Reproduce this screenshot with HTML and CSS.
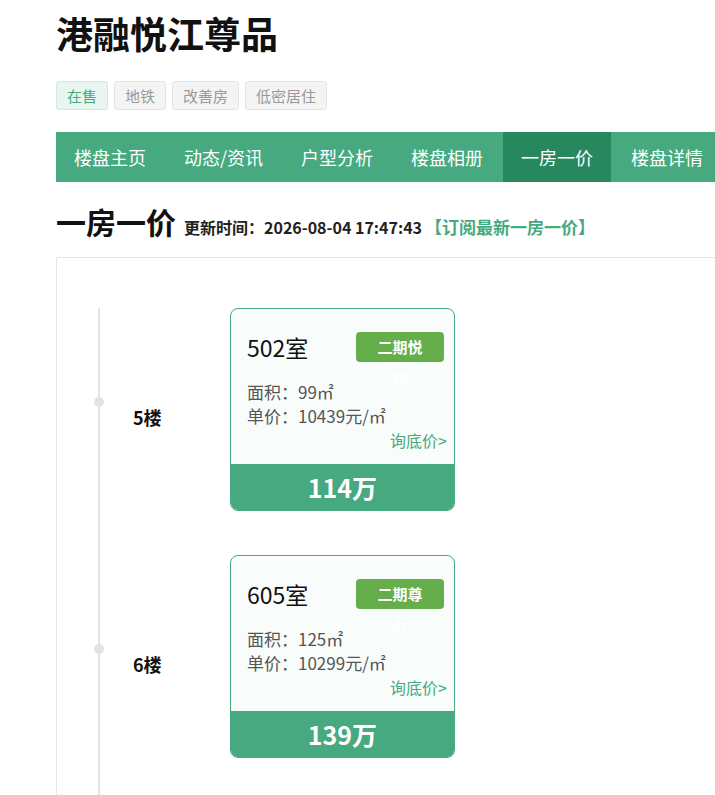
FILE: index.html
```html
<!DOCTYPE html>
<html lang="zh-CN">
<head>
    <meta charset="UTF-8">
    <meta name="viewport" content="width=device-width, initial-scale=1.0">
    <title>港融悦江尊品 - 一房一价</title>
    <link rel="stylesheet" href="styles.css">
</head>
<body>
    <div class="page">
        <h1 class="house-name">港融悦江尊品</h1>
        <div class="tags">
            <span class="tag on-sale">在售</span>
            <span class="tag">地铁</span>
            <span class="tag">改善房</span>
            <span class="tag">低密居住</span>
        </div>

        <ul class="nav">
            <li><a href="#">楼盘主页</a></li>
            <li><a href="#">动态/资讯</a></li>
            <li><a href="#">户型分析</a></li>
            <li><a href="#">楼盘相册</a></li>
            <li class="active"><a href="#">一房一价</a></li>
            <li><a href="#">楼盘详情</a></li>
        </ul>

        <div class="price-head">
            <h2>一房一价</h2>
            <span class="update-time">更新时间：2026-08-04 17:47:43</span>
            <a class="subscribe" href="#">【订阅最新一房一价】</a>
        </div>

        <div class="price-box">
            <div class="timeline">
                <div class="floor-row">
                    <span class="dot"></span>
                    <span class="floor">5楼</span>
                    <div class="room-card">
                        <div class="card-body">
                            <div class="card-top">
                                <span class="room-no">502室</span>
                                <span class="phase">二期悦园</span>
                            </div>
                            <p class="info">面积：99㎡</p>
                            <p class="info">单价：10439元/㎡</p>
                            <a class="ask" href="#">询底价&gt;</a>
                        </div>
                        <div class="total">114万</div>
                    </div>
                </div>
                <div class="floor-row">
                    <span class="dot"></span>
                    <span class="floor">6楼</span>
                    <div class="room-card">
                        <div class="card-body">
                            <div class="card-top">
                                <span class="room-no">605室</span>
                                <span class="phase">二期尊府</span>
                            </div>
                            <p class="info">面积：125㎡</p>
                            <p class="info">单价：10299元/㎡</p>
                            <a class="ask" href="#">询底价&gt;</a>
                        </div>
                        <div class="total">139万</div>
                    </div>
                </div>
            </div>
        </div>
    </div>
</body>
</html>
```

FILE: styles.css
```css
body { margin: 0; font-family: 'Noto Sans CJK SC', 'Noto Sans', sans-serif; color: #111; background: #fff; overflow-x: hidden; }
a { text-decoration: none; }
.page { width: 1200px; padding-left: 56px; }

.house-name { margin: 8px 0 0; font-size: 37px; line-height: 50px; font-weight: bold; color: #111; }

.tags { display: flex; gap: 6px; margin-top: 23px; }
.tag { font-size: 15px; line-height: 27px; padding: 0 10px; border: 1px solid #e3e3e3; border-radius: 3px; background: #f4f4f4; color: #999; }
.tag.on-sale { background: #e9f6f0; border-color: #cfeade; color: #46a980; }

.nav { display: flex; gap: 2px; list-style: none; margin: 22px 0 0; padding: 0; background: #46a980; height: 50px; }
.nav li a { display: block; padding: 0 18px; font-size: 18px; line-height: 50px; color: #fff; }
.nav li.active { background: #27875f; }

.price-head { display: flex; align-items: baseline; margin-top: 19px; line-height: 40px; }
.price-head h2 { margin: 0 8px 0 0; font-size: 30px; font-weight: bold; color: #111; }
.update-time { font-size: 16px; font-weight: bold; color: #222; }
.subscribe { margin-left: 3px; font-size: 17px; font-weight: bold; color: #46a980; }

.price-box { margin-top: 10px; border: 1px solid #e6e6e6; border-right: none; padding: 50px 0 40px 41px; }
/* 时间轴竖线，底部留出一段延伸 */
.timeline { border-left: 2px solid #e3e3e3; padding-bottom: 80px; }
.floor-row { display: flex; align-items: center; margin-bottom: 44px; }
.floor-row:last-child { margin-bottom: 0; }
.dot { width: 10px; height: 10px; border-radius: 50%; background: #e3e3e3; margin: 0 0 15px -6px; flex-shrink: 0; }
.floor { width: 97px; margin: 15px 0 0 29px; font-size: 18px; font-weight: bold; color: #111; }

.room-card { width: 225px; box-sizing: border-box; border: 1px solid #46a980; border-radius: 8px; overflow: hidden; background: #f8fdfb; }
.card-body { padding: 23px 7px 12px 16px; }
.card-top { display: flex; justify-content: space-between; align-items: center; height: 30px; }
.room-no { font-size: 23px; color: #111; }
.phase { width: 88px; height: 30px; box-sizing: border-box; padding: 0 15px; margin-right: 3px; border-radius: 4px; background: #66ae4c; color: #fff; font-size: 15px; font-weight: bold; line-height: 30px; text-align: center; }
.info { margin: 0; font-size: 17px; line-height: 24px; color: #555; }
.card-top + .info { margin-top: 18px; }
.ask { display: block; text-align: right; font-size: 16px; line-height: 24px; color: #46a980; }
.total { height: 46px; background: #46a980; color: #fff; font-size: 25px; font-weight: bold; line-height: 46px; text-align: center; }
```
